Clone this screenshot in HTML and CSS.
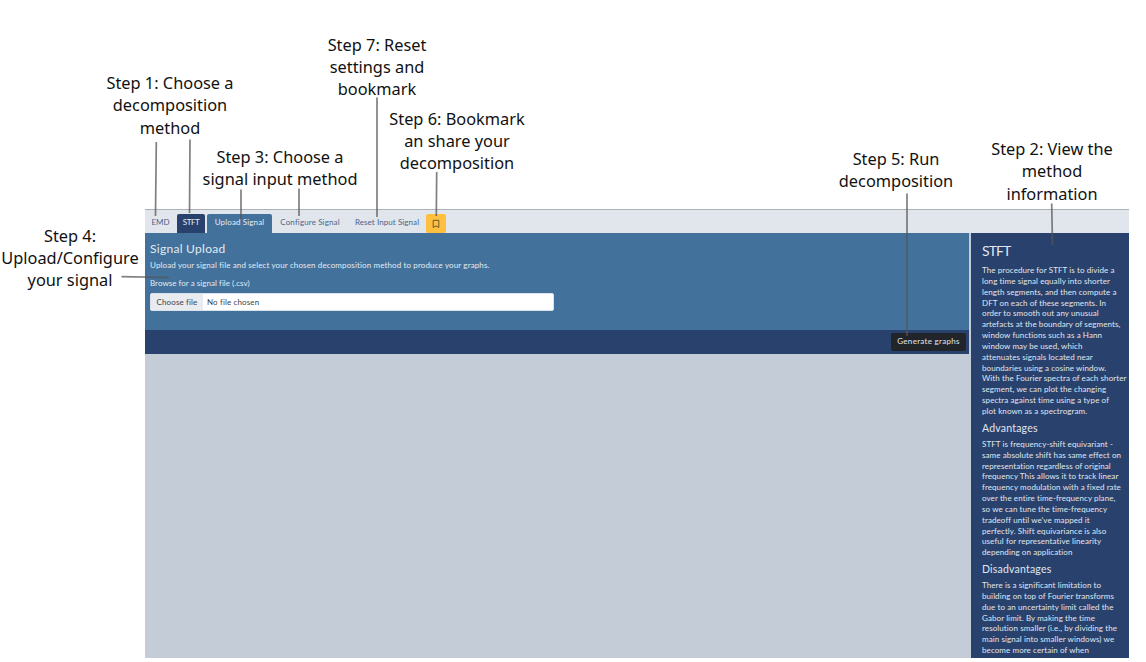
FILE: index.html
```html
<!DOCTYPE html>
<html lang="en">
<head>
<meta charset="utf-8">
<title>Signal decomposition guide</title>
<link rel="stylesheet" href="styles.css">
</head>
<body>
<div class="app">
  <nav class="tabs">
    <a class="tab tab-emd">EMD</a>
    <a class="tab tab-stft">STFT</a>
    <a class="tab tab-upload">Upload Signal</a>
    <a class="tab tab-configure">Configure Signal</a>
    <a class="tab tab-reset">Reset Input Signal</a>
    <button class="bookmark" aria-label="Bookmark"><svg width="8" height="10" viewBox="0 0 8 10"><path d="M1.200 1.300h5.600v7.200L4 6.900 1.200 8.500z" fill="none" stroke="#6f5930" stroke-width="1"/></svg></button>
  </nav>
  <div class="workspace">
    <main class="main">
      <section class="panel">
        <h1 class="panel-title">Signal Upload</h1>
        <p class="intro">Upload your signal file and select your chosen decomposition method to produce your graphs.</p>
        <p class="browse">Browse for a signal file (.csv)</p>
        <div class="file"><span class="file-button">Choose file</span><span class="file-name">No file chosen</span></div>
      </section>
      <div class="actions"><button class="generate">Generate graphs</button></div>
    </main>
    <aside class="info">
      <h2 class="info-title">STFT</h2>
      <p class="info-text">The procedure for STFT is to divide a<br>long time signal equally into shorter<br>length segments, and then compute a<br>DFT on each of these segments. In<br>order to smooth out any unusual<br>artefacts at the boundary of segments,<br>window functions such as a Hann<br>window may be used, which<br>attenuates signals located near<br>boundaries using a cosine window.<br>With the Fourier spectra of each shorter<br>segment, we can plot the changing<br>spectra against time using a type of<br>plot known as a spectrogram.</p>
      <h3 class="info-heading">Advantages</h3>
      <p class="info-text">STFT is frequency-shift equivariant -<br>same absolute shift has same effect on<br>representation regardless of original<br>frequency This allows it to track linear<br>frequency modulation with a fixed rate<br>over the entire time-frequency plane,<br>so we can tune the time-frequency<br>tradeoff until we've mapped it<br>perfectly. Shift equivariance is also<br>useful for representative linearity<br>depending on application</p>
      <h3 class="info-heading">Disadvantages</h3>
      <p class="info-text">There is a significant limitation to<br>building on top of Fourier transforms<br>due to an uncertainty limit called the<br>Gabor limit. By making the time<br>resolution smaller (i.e., by dividing the<br>main signal into smaller windows) we<br>become more certain of when</p>
    </aside>
  </div>
</div>

<!-- Callout labels and their leader lines -->
<p class="note note-1">Step 1: Choose a<br>decomposition<br>method</p>
<p class="note note-2">Step 2: View the<br>method<br>information</p>
<p class="note note-3">Step 3: Choose a<br>signal input method</p>
<p class="note note-4">Step 4:<br>Upload/Configure<br>your signal</p>
<p class="note note-5">Step 5: Run<br>decomposition</p>
<p class="note note-6">Step 6: Bookmark<br>an share your<br>decomposition</p>
<p class="note note-7">Step 7: Reset<br>settings and<br>bookmark</p>
<svg class="leaders" width="1146" height="662" viewBox="0 0 1146 662">
  <path d="M156.300 142L155.500 216M190 139.500L189.500 213M241 189.500V219M299 188.500V216M377 97.500V217M436.700 172L436.300 216M907 193.500V336M1051.700 203.500L1052.500 245M121.500 276.700L169 277.500"/>
</svg>
</body>
</html>
```
FILE: styles.css
```css
* { box-sizing: border-box; }
body { margin: 0; width: 1146px; height: 662px; overflow: hidden; background: #fff; position: relative; padding: 209px 17px 4px 145px; }
p, h1, h2, h3 { margin: 0; font-weight: 400; }
button { border: 0; padding: 0; font: inherit; letter-spacing: inherit; }

.app { height: 449px; display: flex; flex-direction: column; background: #c4cdd7; font: 8px/11px "Lato", sans-serif; letter-spacing: .13px; font-variant-ligatures: none; overflow: hidden; }
.tabs { display: flex; height: 24px; flex: none; padding-top: 4px; border-top: 1px solid #adb2b9; background: #e1e6ed; }
.tab { height: 19px; line-height: 17px; text-align: center; color: #4b6389; white-space: nowrap; border-radius: 2px 2px 0 0; }
.tab-emd { width: 31px; margin-right: 1px; letter-spacing: -.1px; }
.tab-stft { width: 28px; background: #28426d; color: #e6ebf2; letter-spacing: -.5px; }
.tab-upload { width: 65px; margin-left: 2px; background: #42719b; color: #e6edf4; }
.tab-configure { width: 76px; }
.tab-reset { width: 78px; letter-spacing: .08px; }
.bookmark { width: 20px; height: 19px; background: #ffbf3f; border-radius: 2px; display: flex; align-items: center; justify-content: center; }

.workspace { display: flex; gap: 2px; flex: 1; min-height: 0; }
.main { width: 824px; }
.panel { height: 97px; background: #42719b; padding: 8px 5px 0; color: #e3ebf2; }
.panel-title { font-size: 12px; line-height: 16px; letter-spacing: .28px; }
.intro { margin-top: 3px; }
.browse { margin-top: 7px; letter-spacing: .04px; }
.file { display: flex; width: 404px; height: 18px; margin-top: 4px; background: #fff; border-radius: 2px; line-height: 16px; color: #3d4248; overflow: hidden; border: 1px solid #dbe2e9; }
.file-button { width: 52px; background: #e8ebef; text-align: center; }
.file-name { padding-left: 4px; }
.actions { height: 24px; background: #28426d; display: flex; justify-content: flex-end; padding: 3px 3px 0; }
.generate { width: 75px; height: 18px; padding-bottom: 1px; background: #212529; border-radius: 2px; color: #e3e5e8; letter-spacing: .3px; }

.info { width: 158px; flex: none; overflow: hidden; background: #28426d; color: #e0e6ef; padding: 9px 0 0 11px; white-space: nowrap; }
.info-title { font-size: 14px; line-height: 18px; margin-bottom: 5px; letter-spacing: -.9px; }
.info-text { line-height: 10.85px; letter-spacing: .09px; }
.info-heading { font-size: 10.5px; line-height: 13px; margin: 5px 0 4px; letter-spacing: .2px; }

.note { position: absolute; width: 180px; text-align: center; color: #111; font: 16.35px/22.2px "Noto Sans", sans-serif; }
.note-1 { left: 80px; top: 72px; line-height: 22.4px; }
.note-2 { left: 962px; top: 138px; line-height: 22.4px; }
.note-3 { left: 190px; top: 146px; }
.note-4 { left: -20px; top: 225px; }
.note-5 { left: 806px; top: 148px; }
.note-6 { left: 367px; top: 108px; }
.note-7 { left: 287px; top: 34px; }
.leaders { position: absolute; left: 0; top: 0; fill: none; stroke: #555; stroke-opacity: .75; stroke-width: 1.7; }
```
